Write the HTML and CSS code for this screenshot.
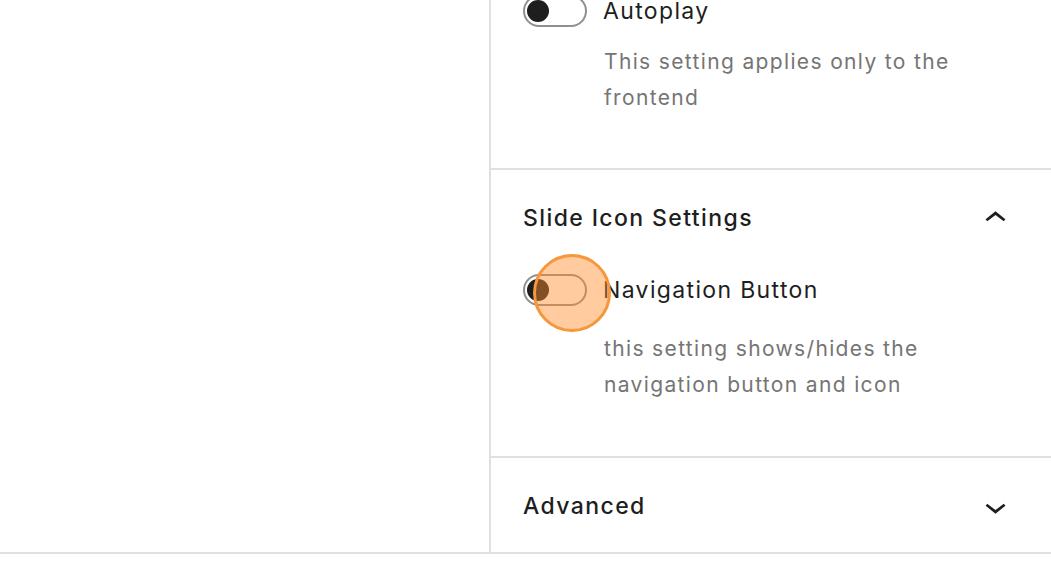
FILE: index.html
```html
<!DOCTYPE html>
<html lang="en">
<head>
<meta charset="utf-8">
<title>Slide settings</title>
<link rel="stylesheet" href="styles.css">
</head>
<body>
<div class="frame">
  <div class="canvas"></div>
  <aside class="sidebar">
    <section class="panel panel-partial">
      <div class="toggle-row">
        <span class="toggle"><span class="thumb"></span></span>
        <span class="toggle-label">Autoplay</span>
      </div>
      <p class="help">This setting applies only to the<br>frontend</p>
    </section>
    <section class="panel panel-open">
      <div class="panel-title">
        <span>Slide Icon Settings</span>
        <svg class="chev" viewBox="0 0 24 24" width="43" height="43" aria-hidden="true"><path d="M6.5 12.4L12 8l5.5 4.4-.9 1.2L12 10l-4.6 3.6-1-1.2z"/></svg>
      </div>
      <div class="toggle-row nav-row">
        <span class="toggle"><span class="thumb"></span></span>
        <span class="toggle-label">Navigation Button</span>
        <span class="click-marker"></span>
      </div>
      <p class="help">this setting shows/hides the<br>navigation button and icon</p>
    </section>
    <section class="panel panel-closed">
      <div class="panel-title">
        <span>Advanced</span>
        <svg class="chev" viewBox="0 0 24 24" width="43" height="43" aria-hidden="true"><path d="M17.5 11.6L12 16l-5.5-4.4.9-1.2L12 14l4.6-3.6 1 1.2z"/></svg>
      </div>
    </section>
  </aside>
</div>
</body>
</html>
```

FILE: styles.css
```css
html, body {
  margin: 0;
  padding: 0;
  background: #ffffff;
}

body {
  font-family: Inter, "Noto Sans", "Liberation Sans", sans-serif;
  color: #1e1e1e;
  overflow: hidden;
}

.frame {
  display: flex;
  height: 552px;
  border-bottom: 2px solid #e0e0e0;
  overflow: hidden;
}

.canvas {
  width: 489px;
  flex: none;
}

.sidebar {
  flex: 1;
  border-left: 2px solid #e0e0e0;
  display: flex;
  flex-direction: column;
}

.panel {
  border-bottom: 2px solid #e0e0e0;
  padding: 0 35px 0 32px;
}

.panel-partial {
  margin-top: -5px;
  padding-bottom: 52px;
}

.panel-open {
  padding-top: 24px;
  padding-bottom: 53px;
}

.panel-closed {
  padding-top: 24px;
  padding-bottom: 22px;
  border-bottom: none;
}

.panel-title {
  height: 48px;
  display: flex;
  align-items: center;
  justify-content: space-between;
  font-size: 23px;
  font-weight: 500;
  letter-spacing: 1.4px;
}

.chev {
  fill: #1e1e1e;
  margin-right: -1px;
}

.toggle-row {
  position: relative;
  display: flex;
  align-items: center;
  height: 32px;
}

.nav-row {
  margin-top: 32px;
}

.toggle {
  position: relative;
  box-sizing: border-box;
  width: 64px;
  height: 32px;
  border: 2px solid #8f8f8f;
  border-radius: 16px;
  background: #ffffff;
  flex: none;
}

.thumb {
  position: absolute;
  left: 2px;
  top: 3px;
  width: 22px;
  height: 22px;
  border-radius: 50%;
  background: #1e1e1e;
}

.toggle-label {
  margin-left: 16px;
  font-size: 23px;
  font-weight: 400;
  letter-spacing: 1.35px;
}

.help {
  margin: 17px 0 0 81px;
  font-size: 21px;
  line-height: 36px;
  color: #757575;
  letter-spacing: 1.35px;
}

.nav-row + .help {
  margin-top: 25px;
}

.click-marker {
  position: absolute;
  left: 10px;
  top: -20px;
  box-sizing: border-box;
  width: 78px;
  height: 78px;
  border-radius: 50%;
  border: 3px solid #f5973a;
  background: rgba(255, 140, 42, 0.45);
}
```
